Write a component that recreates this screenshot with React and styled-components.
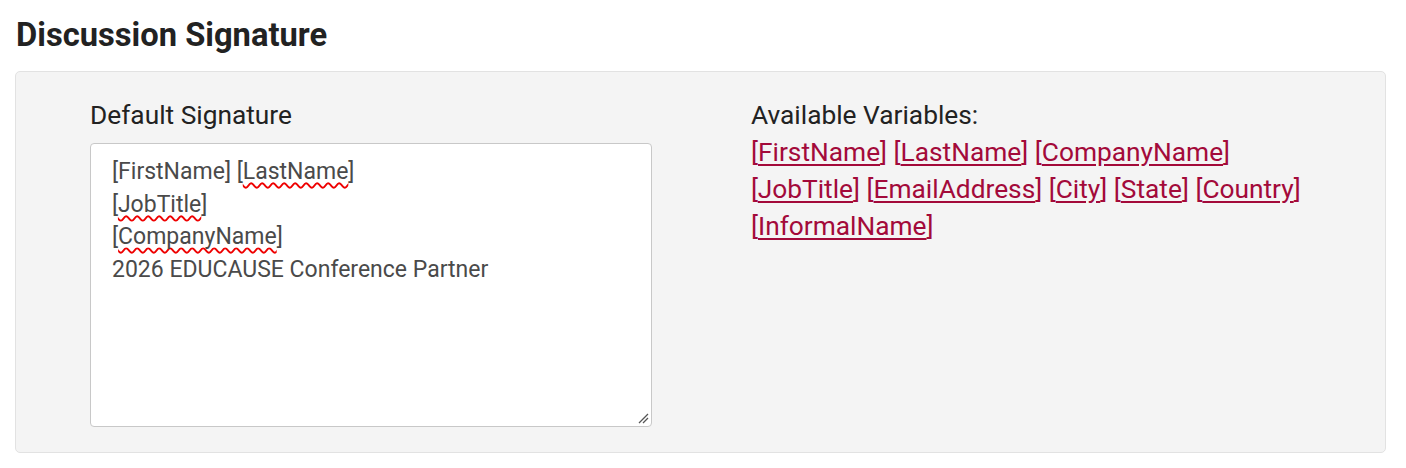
import React from "react";
import styled, { createGlobalStyle } from "styled-components";

const GlobalStyle = createGlobalStyle`
  body {
    margin: 0;
    background: #fff;
    font-family: Roboto, "Liberation Sans", sans-serif;
  }
`;

const Page = styled.div`
  padding: 16px 20px 16px 15px;
`;

const Title = styled.h2`
  margin: 0 0 17px 1px;
  font-size: 32.7px;
  line-height: 38px;
  font-weight: 700;
  color: #222;
`;

const Panel = styled.div`
  display: grid;
  grid-template-columns: 562px 1fr;
  column-gap: 99px;
  padding: 25px 40px 25px 74px;
  background: #f4f4f4;
  border: 1px solid #e2e2e2;
  border-radius: 5px;
`;

const Column = styled.div`
  display: flex;
  flex-direction: column;
`;

const Label = styled.div`
  font-size: 26.3px;
  line-height: 37px;
  color: #222;
  margin-bottom: 9px;
`;

const SignatureBox = styled.div`
  position: relative;
  box-sizing: border-box;
  height: 284px;
  padding: 12px 21px 8px;
  background: #fff;
  border: 1px solid #c8c8c8;
  border-radius: 4px;
  font-size: 23px;
  line-height: 32.7px;
  color: #4a4a4a;
`;

const Misspelled = styled.span`
  text-decoration: underline wavy #e00;
  text-decoration-thickness: 1.5px;
  text-decoration-skip-ink: none;
  text-underline-offset: 3px;
`;

const Grip = styled.svg`
  position: absolute;
  right: 2px;
  bottom: 2px;
`;

const Variables = styled.div`
  font-size: 26.3px;
  line-height: 37px;
  color: #222;
`;

const VarLink = styled.a`
  color: #a30a3a;
  text-decoration: underline;
  text-underline-offset: 3px;
`;

const variables = [
  "FirstName",
  "LastName",
  "CompanyName",
  "JobTitle",
  "EmailAddress",
  "City",
  "State",
  "Country",
  "InformalName",
];

const App = () => (
  <Page>
    <GlobalStyle />
    <Title>Discussion Signature</Title>
    <Panel>
      <Column>
        <Label>Default Signature</Label>
        <SignatureBox>
          <div>
            [FirstName] [<Misspelled>LastName</Misspelled>]
          </div>
          <div>
            [<Misspelled>JobTitle</Misspelled>]
          </div>
          <div>
            [<Misspelled>CompanyName</Misspelled>]
          </div>
          <div>2026 EDUCAUSE Conference Partner</div>
          <Grip width="11" height="11" viewBox="0 0 11 11">
            <path d="M1 10 L10 1 M5 10 L10 5" stroke="#555" strokeWidth="1.3" />
          </Grip>
        </SignatureBox>
      </Column>
      <Variables>
        Available Variables:
        <br />
        {variables.map((v) => (
          <React.Fragment key={v}>
            <VarLink href="#">[{v}]</VarLink>
            {v === "CompanyName" || v === "Country" ? <br /> : " "}
          </React.Fragment>
        ))}
      </Variables>
    </Panel>
  </Page>
);

export default App;
